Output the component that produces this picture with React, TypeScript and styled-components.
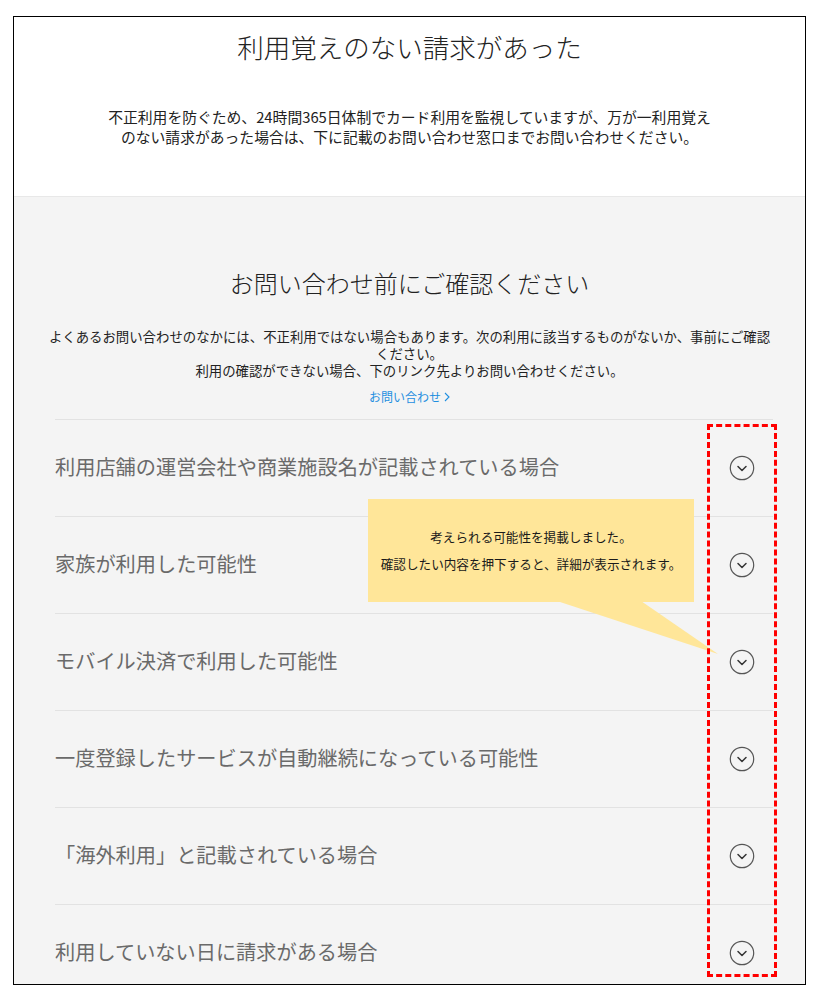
import React from "react";
import styled, { createGlobalStyle } from "styled-components";

const GlobalStyle = createGlobalStyle`
  html, body { margin: 0; padding: 0; background: #ffffff; }
  body { font-family: "Noto Sans CJK JP", "Noto Sans", sans-serif; }
  * { box-sizing: border-box; }
`;

const Page = styled.div`
  padding: 16px 0 0 13px;
`;

const Frame = styled.div`
  position: relative;
  width: 793px;
  height: 969px;
  border: 1px solid #000;
  overflow: hidden;
  background: #fff;
`;

const TopSection = styled.section`
  height: 179px;
  padding-top: 12px;
  display: flex;
  flex-direction: column;
  align-items: center;
  background: #fff;
`;

const Title = styled.h1`
  margin: 0;
  font-size: 26.5px;
  line-height: 36px;
  font-weight: 300;
  color: #222;
  letter-spacing: 0;
`;

const Lead = styled.p`
  margin: 42px 0 0;
  max-width: 612px;
  font-size: 14.8px;
  line-height: 20px;
  color: #222;
  text-align: center;
`;

const GraySection = styled.section`
  background: #f4f4f4;
  border-top: 1px solid #e8e8e8;
  padding-top: 70px;
  display: flex;
  flex-direction: column;
  align-items: center;
`;

const Heading = styled.h2`
  margin: 0;
  font-size: 24px;
  line-height: 32px;
  font-weight: 300;
  color: #222;
`;

const Note = styled.p`
  margin: 29px 0 0;
  padding: 0 32px;
  font-size: 13.4px;
  line-height: 16.8px;
  color: #222;
  text-align: center;
`;

const Link = styled.a`
  margin-top: 11px;
  font-size: 12px;
  line-height: 16px;
  color: #1f8fe0;
  text-decoration: none;
  display: flex;
  align-items: center;
  gap: 3px;
`;

const List = styled.ul`
  list-style: none;
  margin: 14px 0 0;
  padding: 0;
  align-self: stretch;
  margin-left: 41px;
  margin-right: 32px;
`;

const Row = styled.li`
  height: 97px;
  border-top: 1px solid #e2e2e2;
  display: flex;
  align-items: center;
  justify-content: space-between;
  padding: 0 18px 0 0;
`;

const RowLabel = styled.span`
  font-size: 20.2px;
  color: #6a6a6a;
  line-height: 28px;
  margin-top: -3px;
`;

const Callout = styled.div`
  position: absolute;
  left: 354px;
  top: 482px;
  width: 326px;
  height: 103px;
  background: #ffe699;
  display: flex;
  flex-direction: column;
  align-items: center;
  justify-content: center;
  padding-bottom: 2px;
  font-size: 12.6px;
  line-height: 27px;
  color: #1a1a1a;
  z-index: 2;
`;

const CalloutTail = styled.svg`
  position: absolute;
  left: 0;
  top: 0;
  z-index: 2;
  pointer-events: none;
`;

const Annotation = styled.div`
  position: absolute;
  left: 693px;
  top: 407px;
  width: 70px;
  height: 553px;
  border: 3px dashed #ff0000;
  z-index: 3;
  pointer-events: none;
`;

const ChevronCircle = () => (
  <svg width="26" height="26" viewBox="0 0 26 26" fill="none">
    <circle cx="13" cy="13" r="11.7" stroke="#555" strokeWidth="1.2" />
    <polyline
      points="9,11.5 13,15.5 17,11.5"
      stroke="#333"
      strokeWidth="1.5"
      strokeLinecap="round"
      strokeLinejoin="round"
    />
  </svg>
);

const items = [
  "利用店舗の運営会社や商業施設名が記載されている場合",
  "家族が利用した可能性",
  "モバイル決済で利用した可能性",
  "一度登録したサービスが自動継続になっている可能性",
  "「海外利用」と記載されている場合",
  "利用していない日に請求がある場合",
];

export default function App() {
  return (
    <>
      <GlobalStyle />
      <Page>
        <Frame>
          <TopSection>
            <Title>利用覚えのない請求があった</Title>
            <Lead>
              不正利用を防ぐため、24時間365日体制でカード利用を監視していますが、万が一利用覚えのない請求があった場合は、下に記載のお問い合わせ窓口までお問い合わせください。
            </Lead>
          </TopSection>
          <GraySection>
            <Heading>お問い合わせ前にご確認ください</Heading>
            <Note>
              よくあるお問い合わせのなかには、不正利用ではない場合もあります。次の利用に該当するものがないか、事前にご確認ください。
              <br />
              利用の確認ができない場合、下のリンク先よりお問い合わせください。
            </Note>
            <Link href="#">
              お問い合わせ
              <svg width="6" height="10" viewBox="0 0 6 10" fill="none">
                <polyline points="1,1 5,5 1,9" stroke="#1f8fe0" strokeWidth="1.1" />
              </svg>
            </Link>
            <List>
              {items.map((t) => (
                <Row key={t}>
                  <RowLabel>{t}</RowLabel>
                  <ChevronCircle />
                </Row>
              ))}
            </List>
          </GraySection>
          <Callout>
            <div>考えられる可能性を掲載しました。</div>
            <div>確認したい内容を押下すると、詳細が表示されます。</div>
          </Callout>
          <CalloutTail width="793" height="969" viewBox="0 0 793 969">
            <polygon points="543,584 627,584 704,637" fill="#ffe699" />
          </CalloutTail>
          <Annotation />
        </Frame>
      </Page>
    </>
  );
}
